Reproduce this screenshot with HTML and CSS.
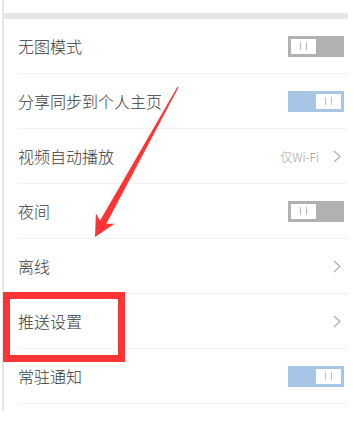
FILE: index.html
```html
<!DOCTYPE html>
<html lang="zh-CN">
<head>
<meta charset="utf-8">
<link rel="stylesheet" href="styles.css">
</head>
<body>
<div class="page">
  <div class="band"></div>
  <div class="list">
    <div class="row"><span class="label">无图模式</span><span class="switch off"><span class="knob"><i></i><i></i></span></span></div>
    <div class="row"><span class="label">分享同步到个人主页</span><span class="switch on"><span class="knob"><i></i><i></i></span></span></div>
    <div class="row"><span class="label">视频自动播放</span><span class="right"><span class="value">仅Wi-Fi</span><svg class="chev" width="8" height="13" viewBox="0 0 8 13"><polyline points="1,1 7,6.5 1,12" fill="none" stroke="#aaa" stroke-width="1.1"/></svg></span></div>
    <div class="row"><span class="label">夜间</span><span class="switch off"><span class="knob"><i></i><i></i></span></span></div>
    <div class="row"><span class="label">离线</span><svg class="chev" width="8" height="13" viewBox="0 0 8 13"><polyline points="1,1 7,6.5 1,12" fill="none" stroke="#aaa" stroke-width="1.1"/></svg></div>
    <div class="row"><span class="label">推送设置</span><svg class="chev" width="8" height="13" viewBox="0 0 8 13"><polyline points="1,1 7,6.5 1,12" fill="none" stroke="#aaa" stroke-width="1.1"/></svg></div>
    <div class="row"><span class="label">常驻通知</span><span class="switch on"><span class="knob"><i></i><i></i></span></span></div>
  </div>
</div>
<div class="highlight"></div>
<svg class="arrow" width="354" height="429" viewBox="0 0 354 429">
  <polygon points="95,237 95.9,213.5 100.1,220.4 177.6,86.6 178.6,87.2 106.3,223.8 114.5,223.7" fill="#ff3535"/>
</svg>
</body>
</html>
```

FILE: styles.css
```css
html, body {
  margin: 0;
  padding: 0;
  background: #ffffff;
}
body {
  width: 354px;
  height: 429px;
  position: relative;
  overflow: hidden;
  font-family: "Noto Sans CJK SC", "Noto Sans", sans-serif;
}
.page {
  margin-left: 2px;
  width: 344px;
  border-left: 2px solid #e6e6e6;
  padding-top: 13px;
  padding-bottom: 7px;
}
.band {
  height: 6px;
  background: #e6e6e6;
}
.list {
  padding-left: 14px;
}
.row {
  height: 54px;
  border-bottom: 1px solid #f2f2f2;
  display: flex;
  align-items: center;
  justify-content: space-between;
  padding-right: 4px;
}
.label {
  font-size: 16px;
  font-weight: 300;
  color: #383838;
  line-height: 20px;
}
.switch {
  width: 56px;
  height: 21px;
  box-sizing: border-box;
  padding: 3px;
  display: flex;
}
.switch.off {
  background: #b1b1b1;
  justify-content: flex-start;
}
.switch.on {
  background: #a7c5e5;
  justify-content: flex-end;
}
.knob {
  width: 25px;
  height: 15px;
  background: #ffffff;
  display: flex;
  align-items: center;
  justify-content: center;
  gap: 5px;
}
.knob i {
  display: block;
  width: 1px;
  height: 8px;
  background: #b8b8b8;
}
.switch.on .knob i {
  background: #a7c5e5;
}
.right {
  display: flex;
  align-items: center;
}
.value {
  font-size: 12px;
  font-weight: 300;
  color: #a0a0a0;
  margin-right: 14px;
}
.chev {
  display: block;
  margin-right: 3px;
}
.highlight {
  position: absolute;
  left: 3px;
  top: 292px;
  width: 108px;
  height: 56px;
  border: 7px solid #ff3535;
}
.arrow {
  position: absolute;
  left: 0;
  top: 0;
}
```
